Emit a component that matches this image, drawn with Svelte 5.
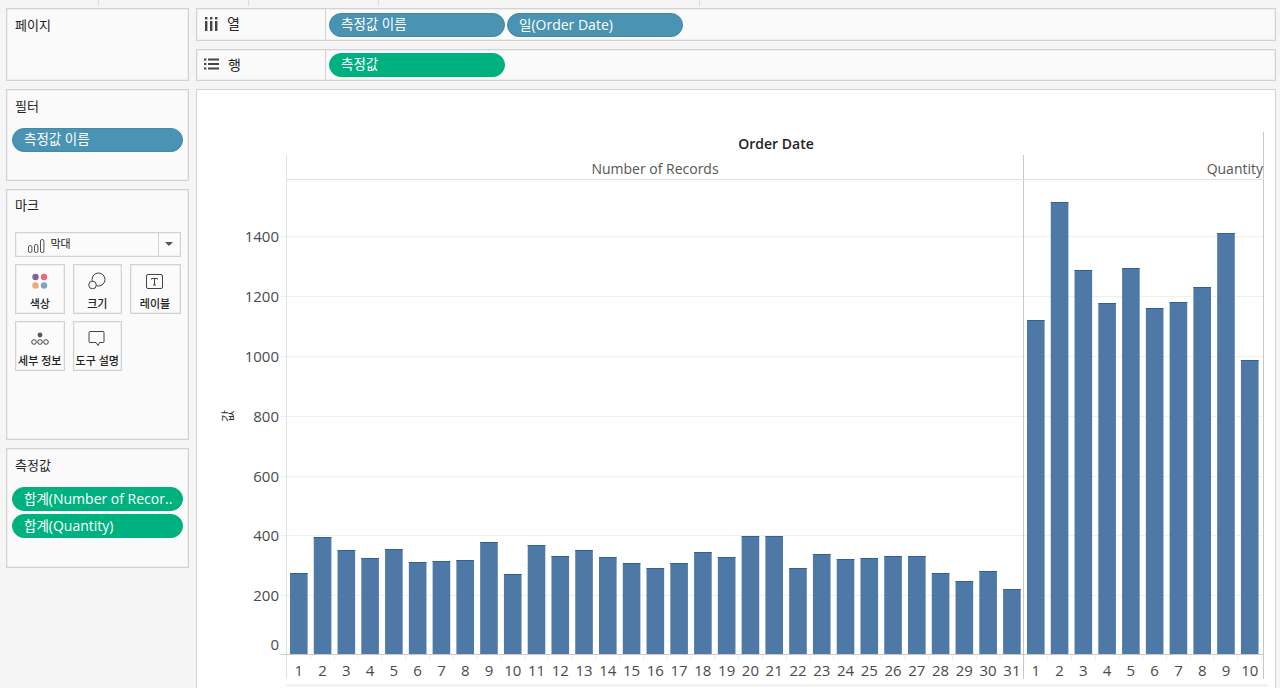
<script>
  const records = [573,537,550,558,549,562,561,560,542,574,545,556,550,557,563,568,563,552,557,536,536,568,554,559,558,556,556,573,581,571,589];
  const quantity = [320,202,270,303,268,308,302,287,233,360];
  const pitch = 23.77;
  const base = 654;
  const yTicks = [
    { label: '1400', y: 236 }, { label: '1200', y: 296 }, { label: '1000', y: 356 },
    { label: '800', y: 416 }, { label: '600', y: 476 }, { label: '400', y: 535 }, { label: '200', y: 595 }
  ];
  const group = (tops, start) =>
    tops.map((top, i) => ({ top, x: start + i * pitch, label: String(i + 1) }));
  const bars = [...group(records, 290), ...group(quantity, 1027)];
</script>

<div class="app">
  <div class="strip">
    <i style="left:98px"></i><i style="left:248px"></i><i style="left:378px"></i><i style="left:699px"></i>
  </div>
  <div class="body">
    <aside class="side">
      <section class="card page"><h3>페이지</h3></section>
      <section class="card filter">
        <h3>필터</h3>
        <div class="pills"><div class="pill blue">측정값 이름</div></div>
      </section>
      <section class="card mark">
        <h3>마크</h3>
        <div class="select">
          <svg class="bars-ico" width="17" height="14" viewBox="0 0 17 14" fill="none" stroke="#555" stroke-width="1">
            <rect x="0.5" y="6.5" width="3.4" height="7" rx="1.5"/>
            <rect x="6.5" y="5.5" width="3.4" height="8" rx="1.5"/>
            <rect x="12.5" y="0.5" width="3.4" height="13" rx="1.5"/>
          </svg>
          <span class="sel-text">막대</span>
          <span class="caret"></span>
        </div>
        <div class="btns">
          <div class="btn">
            <svg width="20" height="20" viewBox="0 0 20 20">
              <circle cx="5.5" cy="5" r="3.2" fill="#7b6394"/><circle cx="14" cy="5" r="3.2" fill="#f0667f"/>
              <circle cx="5.5" cy="13.5" r="3.2" fill="#f0a777"/><circle cx="14" cy="13.5" r="3.2" fill="#7ba4c9"/>
            </svg>
            <span>색상</span>
          </div>
          <div class="btn">
            <svg width="20" height="20" viewBox="0 0 20 20" fill="none" stroke="#444" stroke-width="1">
              <circle cx="11.5" cy="7.5" r="6.5"/><circle cx="5.5" cy="13" r="3.8" fill="#fafafa"/>
            </svg>
            <span>크기</span>
          </div>
          <div class="btn">
            <svg width="18" height="20" viewBox="0 0 18 20" fill="none" stroke="#444" stroke-width="1">
              <rect x="0.5" y="2.5" width="16" height="14" rx="1.5"/>
              <path d="M5.5 6.5h6M8.5 6.5v6.5M7 13h3M5.5 6.5v1M11.5 6.5v1"/>
            </svg>
            <span>레이블</span>
          </div>
          <div class="btn">
            <svg width="20" height="20" viewBox="0 0 20 20" fill="none" stroke="#444" stroke-width="1">
              <circle cx="10" cy="6" r="2.4" fill="#555" stroke="none"/>
              <circle cx="4" cy="13" r="2.3"/><circle cx="10" cy="13" r="2.3"/><circle cx="16" cy="13" r="2.3"/>
            </svg>
            <span>세부 정보</span>
          </div>
          <div class="btn">
            <svg width="18" height="20" viewBox="0 0 18 20" fill="none" stroke="#444" stroke-width="1">
              <path d="M2 2.5h13a1 1 0 0 1 1 1v9a1 1 0 0 1-1 1h-3.5l-1.5 3-2-3H2a1 1 0 0 1-1-1v-9a1 1 0 0 1 1-1z"/>
            </svg>
            <span>도구 설명</span>
          </div>
        </div>
      </section>
      <section class="card measure">
        <h3>측정값</h3>
        <div class="pills">
          <div class="pill green">합계<span class="lat">(Number of Recor..</span></div>
          <div class="pill green">합계<span class="lat">(Quantity)</span></div>
        </div>
      </section>
    </aside>

    <main class="main">
      <div class="shelf first">
        <div class="shelf-head">
          <svg class="ico-cols" width="14" height="14" viewBox="0 0 14 14" fill="#444">
            <rect x="0" y="0" width="2.4" height="2.4"/><rect x="0" y="4" width="2.4" height="10"/>
            <rect x="5" y="0" width="2.4" height="2.4"/><rect x="5" y="4" width="2.4" height="10"/>
            <rect x="10" y="0" width="2.4" height="2.4"/><rect x="10" y="4" width="2.4" height="10"/>
          </svg>
          <span>열</span>
        </div>
        <div class="shelf-body">
          <div class="pill blue wide">측정값 이름</div>
          <div class="pill blue wide">일<span class="lat">(Order Date)</span></div>
        </div>
      </div>
      <div class="shelf second">
        <div class="shelf-head">
          <svg class="ico-rows" width="15" height="12" viewBox="0 0 15 12" fill="#444">
            <rect x="0" y="0.5" width="2.4" height="2"/><rect x="4" y="0.5" width="11" height="2"/>
            <rect x="0" y="5" width="2.4" height="2"/><rect x="4" y="5" width="11" height="2"/>
            <rect x="0" y="9.5" width="2.4" height="2"/><rect x="4" y="9.5" width="11" height="2"/>
          </svg>
          <span>행</span>
        </div>
        <div class="shelf-body"><div class="pill green wide">측정값</div></div>
      </div>
      <div class="view">
        <svg class="chart" viewBox="196 89 1080 600" width="1080" height="600">
          {#each yTicks as t}
            <line x1="281" x2="1263" y1={t.y + 0.5} y2={t.y + 0.5} class="grid" />
            <text x="279" y={t.y + 5.5} class="tick" text-anchor="end">{t.label}</text>
          {/each}
          <text x="279" y="650" class="tick" text-anchor="end">0</text>
          <text class="axis" transform="translate(232 416) rotate(-90)" text-anchor="middle">값</text>

          {#each bars as b}
            <rect x={b.x} y={b.top} width="17.6" height={base - b.top} class="bar" />
            <rect x={b.x} y={b.top} width="17.6" height="1" class="bar-top" />
            <line x1={b.x + 20.7} x2={b.x + 20.7} y1="656" y2="660" class="minor" />
            <text x={b.x + 8.8} y="676" class="tick" text-anchor="middle">{b.label}</text>
          {/each}

          <line x1="286.5" x2="286.5" y1="155" y2="679" class="rule" />
          <line x1="1023.5" x2="1023.5" y1="155" y2="679" class="rule dark" />
          <line x1="1263.5" x2="1263.5" y1="132" y2="679" class="rule dark" />
          <line x1="286" x2="1264" y1="179.5" y2="179.5" class="rule" />
          <line x1="281" x2="1264" y1="654.5" y2="654.5" class="rule dark" />
          <line x1="286" x2="1268" y1="685.5" y2="685.5" class="foot" />

          <text x="776" y="149" class="title" text-anchor="middle">Order Date</text>
          <text x="655" y="174" class="head" text-anchor="middle">Number of Records</text>
          <text x="1263" y="174" class="head" text-anchor="end">Quantity</text>
        </svg>
      </div>
    </main>
  </div>
</div>

<style>
  :global(body) {
    margin: 0;
    background: #f5f5f5;
  }
  .app {
    width: 1280px;
    height: 688px;
    overflow: hidden;
    display: flex;
    flex-direction: column;
    font-family: "Open Sans", "Noto Sans CJK KR", sans-serif;
    color: #222;
  }
  .strip {
    height: 8px;
    flex: none;
    position: relative;
  }
  .strip i {
    position: absolute;
    top: 0;
    width: 1px;
    height: 6px;
    background: #dcdcdc;
  }
  .body {
    flex: 1;
    display: flex;
    gap: 7px;
    padding: 0 4px 0 6px;
    min-height: 0;
  }
  .side {
    width: 183px;
    flex: none;
    display: flex;
    flex-direction: column;
    gap: 8px;
  }
  .card {
    box-sizing: border-box;
    background: #fafafa;
    border: 1px solid #d2d2d2;
    box-shadow: inset 0 0 0 1px #efefef;
    padding: 7px 8px 0;
  }
  .card h3 {
    margin: 0;
    font-size: 13px;
    line-height: 18px;
    font-weight: 400;
    color: #222;
  }
  .mark h3 {
    margin: -1px 0 1px;
  }
  .page { height: 73px; }
  .filter { height: 92px; }
  .mark { height: 251px; }
  .measure { height: 120px; }
  .pills {
    margin: 13px -3px 0 -3px;
    display: flex;
    flex-direction: column;
    gap: 3px;
  }
  .pill {
    box-sizing: border-box;
    height: 24px;
    line-height: 21px;
    border-radius: 12px;
    padding-left: 11px;
    color: #fff;
    font-size: 13.5px;
    white-space: nowrap;
    overflow: hidden;
  }
  .lat { font-size: 14px; }
  .blue { background: #4a93b2; border: 1px solid #4388a6; }
  .green { background: #00b180; border: 1px solid #00b180; }
  .wide { width: 176px; }
  .select {
    box-sizing: border-box;
    height: 25px;
    margin-top: 18px;
    margin-left: -0.5px;
    width: 166px;
    border: 1px solid #d2d2d2;
    box-shadow: inset 0 0 0 1px #f1f1f1;
    background: #fbfbfb;
    display: flex;
    align-items: center;
    position: relative;
    padding-left: 12px;
  }
  .sel-text {
    font-size: 11px;
    margin-left: 6px;
    margin-top: -3px;
  }
  .bars-ico { margin-top: 2px; }
  .caret {
    position: absolute;
    right: 0;
    top: 0;
    bottom: 0;
    width: 21px;
    border-left: 1px solid #d2d2d2;
  }
  .caret::after {
    content: "";
    position: absolute;
    left: 6px;
    top: 9px;
    border-left: 4px solid transparent;
    border-right: 4px solid transparent;
    border-top: 4px solid #555;
  }
  .btns {
    margin-top: 7px;
    margin-left: -0.5px;
    width: 167px;
    display: grid;
    grid-template-columns: 50.5px 49.5px 51px;
    column-gap: 7.5px;
    row-gap: 7px;
  }
  .btn {
    box-sizing: border-box;
    height: 50px;
    background: #fbfbfb;
    border: 1px solid #d2d2d2;
    box-shadow: inset 0 0 0 1px #efefef;
    display: flex;
    flex-direction: column;
    align-items: center;
    padding-top: 7px;
  }
  .btn svg { flex: none; height: 20px; }
  .btn span {
    font-size: 11px;
    line-height: 14px;
    margin-top: 5px;
    font-weight: 500;
    color: #222;
    white-space: nowrap;
  }
  .main {
    flex: 1;
    min-width: 0;
    display: flex;
    flex-direction: column;
    gap: 8px;
  }
  .shelf {
    box-sizing: border-box;
    flex: none;
    display: flex;
    background: #fafafa;
    border: 1px solid #d2d2d2;
    box-shadow: inset 0 0 0 1px #efefef;
  }
  .shelf.first { height: 33px; }
  .shelf.second { height: 32px; }
  .shelf-head {
    width: 129px;
    flex: none;
    box-sizing: border-box;
    border-right: 1px solid #d2d2d2;
    display: flex;
    align-items: center;
    gap: 8px;
    padding: 0 0 3px 8px;
    font-size: 14px;
  }
  .ico-cols { margin-top: 2px; }
  .ico-rows { margin-left: -1px; margin-right: 1px; }
  .shelf-body {
    display: flex;
    gap: 2px;
    padding: 3px 0 0 3px;
  }
  .shelf.first .shelf-body { padding-top: 4px; }
  .view {
    flex: 1;
    min-height: 0;
    box-sizing: border-box;
    background: #fff;
    border: 1px solid #d2d2d2;
    border-bottom: none;
    overflow: hidden;
  }
  .chart {
    display: block;
    margin: -1px;
  }
  .grid { stroke: #efefef; stroke-width: 1; }
  .rule { stroke: #e2e2e2; stroke-width: 1; }
  .rule.dark { stroke: #c8c8c8; }
  .minor { stroke: #ececec; stroke-width: 1; }
  .foot { stroke: #eeeeee; stroke-width: 2; }
  .bar { fill: #4e79a7; }
  .bar-top { fill: #2f6396; }
  .tick {
    font-size: 15px;
    fill: #4a4a4a;
    font-family: "Open Sans", sans-serif;
  }
  .axis {
    font-size: 13px;
    fill: #333;
    font-family: "Noto Sans CJK KR", sans-serif;
  }
  .title {
    font-size: 14px;
    font-weight: 600;
    fill: #222;
    font-family: "Open Sans", sans-serif;
  }
  .head {
    font-size: 14px;
    fill: #555;
    font-family: "Open Sans", sans-serif;
  }
</style>
